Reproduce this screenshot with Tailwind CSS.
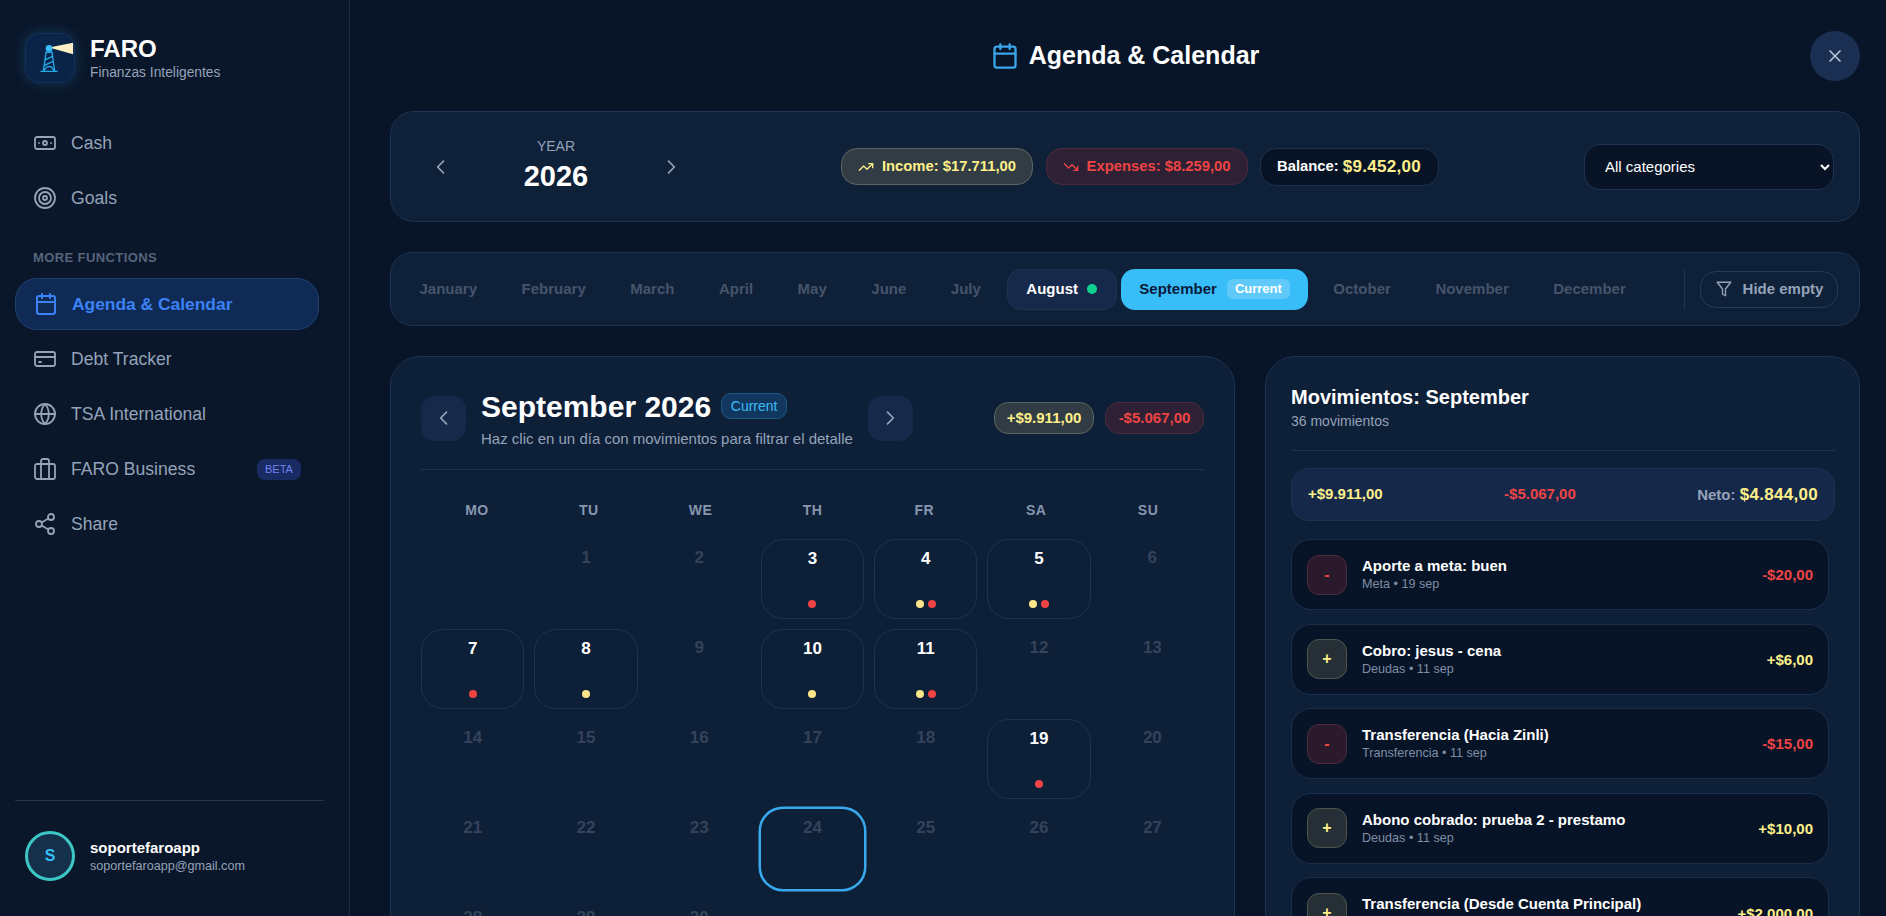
<!DOCTYPE html>
<html lang="en">
<head>
  <meta charset="UTF-8">
  <title>FARO - Agenda & Calendar</title>
  <meta name="viewport" content="width=device-width, initial-scale=1.0">
  <script src="https://cdn.jsdelivr.net/npm/@tailwindcss/browser@4"></script>
</head>
<body class="h-screen overflow-hidden flex bg-[#081528] text-white font-['Liberation_Sans',Arial,sans-serif]">
  <!-- Sidebar -->
  <aside class="w-[350px] shrink-0 h-full flex flex-col bg-[#0a162a] border-r border-[#1c2c45] pt-[33px] pl-[15px] pr-[25px]">
    <div class="flex items-center gap-[15px] ml-[10px]">
      <div class="w-[50px] h-[50px] rounded-[14px] bg-[#0a2448] border border-[#123058] shadow-[0_0_14px_rgba(56,189,248,0.22)] overflow-hidden">
        <svg viewBox="0 0 50 50" class="w-full h-full" fill="none">
          <polygon points="24,14 49,9 49,21" fill="#fdf0c4"/>
          <circle cx="24" cy="15" r="3.5" fill="#38bdf8"/>
          <path d="M20 19h8M21 19l-3 20M27 19l3 20M15 39h18M20 27l8-4M19 33l10-5M18 39l4-5h4l4 5" stroke="#25a9e6" stroke-width="1.4"/>
        </svg>
      </div>
      <div>
        <div class="text-2xl leading-[27px] font-bold">FARO</div>
        <div class="text-[13.8px] leading-[17px] mt-[2px] text-[#94a3b8]">Finanzas Inteligentes</div>
      </div>
    </div>

    <nav class="mt-[34px] flex flex-col gap-[3px] text-[17.6px] text-[#94a3b8]">
      <a class="h-[52px] pl-[18px] flex items-center gap-[14px]">
        <svg class="w-6 h-6" viewBox="0 0 24 24" fill="none" stroke="currentColor" stroke-width="1.8" stroke-linecap="round" stroke-linejoin="round"><rect x="2" y="6" width="20" height="12" rx="2"/><circle cx="12" cy="12" r="2"/><path d="M6 12h.01M18 12h.01"/></svg>
        Cash
      </a>
      <a class="h-[52px] pl-[18px] flex items-center gap-[14px]">
        <svg class="w-6 h-6" viewBox="0 0 24 24" fill="none" stroke="currentColor" stroke-width="1.8"><circle cx="12" cy="12" r="10"/><circle cx="12" cy="12" r="6"/><circle cx="12" cy="12" r="2"/></svg>
        Goals
      </a>
      <div class="mt-[23px] mb-[9px] ml-[18px] h-4 leading-4 text-[13px] font-bold tracking-[0.4px] text-[#56657c]">MORE FUNCTIONS</div>
      <a class="h-[52px] mr-[5px] pl-[18px] flex items-center gap-[14px] rounded-[22px] bg-[#0f2a55] border border-[#1d4070] font-bold text-[#3b82f6] text-[17.4px]">
        <svg class="w-6 h-6" viewBox="0 0 24 24" fill="none" stroke="currentColor" stroke-width="2" stroke-linecap="round" stroke-linejoin="round"><path d="M8 2v4M16 2v4"/><rect x="3" y="4" width="18" height="18" rx="2"/><path d="M3 10h18"/></svg>
        Agenda &amp; Calendar
      </a>
      <a class="h-[52px] pl-[18px] flex items-center gap-[14px]">
        <svg class="w-6 h-6" viewBox="0 0 24 24" fill="none" stroke="currentColor" stroke-width="1.8" stroke-linecap="round" stroke-linejoin="round"><rect x="2" y="5" width="20" height="14" rx="2"/><path d="M2 10h20M6 15h2"/></svg>
        Debt Tracker
      </a>
      <a class="h-[52px] pl-[18px] flex items-center gap-[14px]">
        <svg class="w-6 h-6" viewBox="0 0 24 24" fill="none" stroke="currentColor" stroke-width="1.8" stroke-linecap="round" stroke-linejoin="round"><circle cx="12" cy="12" r="10"/><path d="M2 12h20M12 2a15 15 0 0 1 0 20a15 15 0 0 1 0-20z"/></svg>
        TSA International
      </a>
      <a class="h-[52px] pl-[18px] pr-[23px] flex items-center gap-[14px]">
        <svg class="w-6 h-6" viewBox="0 0 24 24" fill="none" stroke="currentColor" stroke-width="1.8" stroke-linecap="round" stroke-linejoin="round"><rect x="2" y="7" width="20" height="15" rx="2"/><path d="M8 22V4a2 2 0 0 1 2-2h4a2 2 0 0 1 2 2v18"/></svg>
        FARO Business
        <span class="ml-auto w-[44px] h-[21px] rounded-[8px] bg-[#1a2a63] text-[#6f83f0] text-[11px] flex items-center justify-center">BETA</span>
      </a>
      <a class="h-[52px] pl-[18px] flex items-center gap-[14px]">
        <svg class="w-6 h-6" viewBox="0 0 24 24" fill="none" stroke="currentColor" stroke-width="1.8" stroke-linecap="round" stroke-linejoin="round"><circle cx="18" cy="5" r="3"/><circle cx="6" cy="12" r="3"/><circle cx="18" cy="19" r="3"/><path d="M8.6 13.5l6.8 4M15.4 6.5l-6.8 4"/></svg>
        Share
      </a>
    </nav>

    <div class="mt-auto border-t border-[#1f3450] h-[116px] pt-[30px] pl-[10px] flex items-start gap-[15px]">
      <div class="w-[50px] h-[50px] rounded-full bg-[#14304a] border-[3px] border-[#3cc7c4] flex items-center justify-center text-[#38bdf8] font-bold text-base">S</div>
      <div class="pt-[7px]">
        <div class="text-[15px] leading-[19px] font-bold">soportefaroapp</div>
        <div class="text-[12.6px] leading-[18px] text-[#94a3b8]">soportefaroapp@gmail.com</div>
      </div>
    </div>
  </aside>

  <!-- Main -->
  <main class="flex-1 min-w-0 h-full overflow-hidden pt-[31px] pl-10 pr-[26px]">
    <header class="grid grid-cols-[1fr_auto_1fr] items-center h-[50px] mb-[30px]">
      <div></div>
      <h1 class="flex items-center gap-[10px] text-[25px] font-bold">
        <svg class="w-7 h-7 text-[#38a6e8]" viewBox="0 0 24 24" fill="none" stroke="currentColor" stroke-width="2" stroke-linecap="round" stroke-linejoin="round"><path d="M8 2v4M16 2v4"/><rect x="3" y="4" width="18" height="18" rx="2"/><path d="M3 10h18"/></svg>
        Agenda &amp; Calendar
      </h1>
      <button class="justify-self-end w-[50px] h-[50px] rounded-full bg-[#1a2f52] flex items-center justify-center text-[#b6c4d8]">
        <svg class="w-5 h-5" viewBox="0 0 24 24" fill="none" stroke="currentColor" stroke-width="2" stroke-linecap="round"><path d="M18 6L6 18M6 6l12 12"/></svg>
      </button>
    </header>

    <!-- Year bar -->
    <section class="h-[111px] rounded-[24px] bg-[#0f2039] border border-[#1e3352] px-[25px] flex items-center justify-between">
      <div class="flex items-center">
        <button class="w-[50px] flex justify-center text-[#94a3b8]">
          <svg class="w-5 h-5" viewBox="0 0 24 24" fill="none" stroke="currentColor" stroke-width="2" stroke-linecap="round" stroke-linejoin="round"><path d="M15 5l-7 7 7 7"/></svg>
        </button>
        <div class="w-[180px] text-center -mt-[3px]">
          <div class="text-sm leading-[18px] text-[#94a3b8]">YEAR</div>
          <div class="text-[29px] leading-[36px] font-bold mt-[3px]">2026</div>
        </div>
        <button class="w-[50px] flex justify-center text-[#94a3b8]">
          <svg class="w-5 h-5" viewBox="0 0 24 24" fill="none" stroke="currentColor" stroke-width="2" stroke-linecap="round" stroke-linejoin="round"><path d="M9 5l7 7-7 7"/></svg>
        </button>
      </div>
      <div class="flex items-center gap-[12.5px] text-[14.8px] font-bold">
        <div class="h-[37px] px-4 rounded-[16px] bg-[#323c44] border border-[#5c665f] text-[#fef08a] flex items-center gap-2">
          <svg class="w-4 h-4" viewBox="0 0 24 24" fill="none" stroke="currentColor" stroke-width="2" stroke-linecap="round" stroke-linejoin="round"><path d="M22 7l-8.5 8.5-5-5L2 17"/><path d="M16 7h6v6"/></svg>
          Income: $17.711,00
        </div>
        <div class="h-[37px] px-4 rounded-[16px] bg-[#2e2136] border border-[#4d2a3a] text-[#ef4444] flex items-center gap-2">
          <svg class="w-4 h-4" viewBox="0 0 24 24" fill="none" stroke="currentColor" stroke-width="2" stroke-linecap="round" stroke-linejoin="round"><path d="M22 17l-8.5-8.5-5 5L2 7"/><path d="M16 17h6v-6"/></svg>
          Expenses: $8.259,00
        </div>
        <div class="h-[38px] pl-4 pr-[17px] rounded-[16px] bg-[#081426] border border-[#1c3150] flex items-center gap-1">
          Balance: <span class="text-[17px] tracking-[0.3px] text-[#fef08a]">$9.452,00</span>
        </div>
      </div>
      <select class="w-[250px] h-[46px] rounded-[16px] bg-[#081426] border border-[#1e3352] pl-4 text-[15px] text-white">
        <option>All categories</option>
      </select>
    </section>

    <!-- Month tabs -->
    <section class="mt-[30px] h-[74px] rounded-[22px] bg-[#0f2039] border border-[#1e3352] pl-[10.5px] pr-[21px] flex items-center text-[15px] font-bold text-[#46546b]">
      <div class="flex items-center gap-[8.5px]">
        <span class="h-[41px] px-[18px] flex items-center">January</span>
        <span class="h-[41px] px-[18px] flex items-center">February</span>
        <span class="h-[41px] px-[18px] flex items-center">March</span>
        <span class="h-[41px] px-[18px] flex items-center">April</span>
        <span class="h-[41px] px-[18px] flex items-center">May</span>
        <span class="h-[41px] px-[18px] flex items-center">June</span>
        <span class="h-[41px] px-[18px] flex items-center">July</span>
        <span class="h-[41px] w-[109.5px] -mr-[4px] px-[18px] flex items-center gap-[9px] rounded-[14px] bg-[#16294a] border border-[#1e3352] text-white">August <i class="w-[10px] h-[10px] rounded-full bg-[#10d08f]"></i></span>
        <span class="h-[41px] -mr-px px-[18px] flex items-center gap-[10px] rounded-[14px] bg-[#38bdf8] text-[#0b1a3a]">September <i class="not-italic w-[63px] h-[20px] rounded-[6px] bg-white/20 text-white text-[13px] flex items-center justify-center">Current</i></span>
        <span class="h-[41px] px-[18px] flex items-center">October</span>
        <span class="h-[41px] px-[18px] flex items-center">November</span>
        <span class="h-[41px] px-[18px] flex items-center">December</span>
      </div>
      <div class="ml-auto flex items-center gap-[15px]">
        <div class="w-px h-[42px] bg-[#1e3352]"></div>
        <button class="w-[138px] h-[37px] rounded-[16px] border border-[#263b5a] flex items-center justify-center gap-[10px] text-[#94a3b8] text-[15px] font-bold">
          <svg class="w-[18px] h-[18px]" viewBox="0 0 24 24" fill="none" stroke="currentColor" stroke-width="1.8" stroke-linejoin="round"><path d="M3 3h18l-7 9v9l-4-2v-7z"/></svg>
          Hide empty
        </button>
      </div>
    </section>

    <div class="mt-[30px] grid grid-cols-[845px_595px] gap-[30px]">
      <!-- Calendar -->
      <section class="rounded-t-[30px] bg-[#0e1f38] border border-[#1e3352] px-[30px] pt-[31px] h-[700px]">
        <div class="h-[82px] pb-[21px] border-b border-[#1e3352] flex items-center justify-between">
          <div class="flex items-center">
            <button class="w-[45px] h-[45px] rounded-[14px] bg-[#16294a] flex items-center justify-center text-[#94a3b8]">
              <svg class="w-5 h-5" viewBox="0 0 24 24" fill="none" stroke="currentColor" stroke-width="2" stroke-linecap="round" stroke-linejoin="round"><path d="M15 5l-7 7 7 7"/></svg>
            </button>
            <div class="ml-[15px] mr-[15px]">
              <div class="flex items-center gap-[10px] translate-y-px">
                <h2 class="text-3xl leading-[36px] font-bold">September 2026</h2>
                <span class="h-[26px] w-[66px] rounded-[10px] bg-[#11375e] border border-[#1c5a85] text-[#38bdf8] text-sm flex items-center justify-center -mt-[2px]">Current</span>
              </div>
              <p class="text-[15px] leading-[20px] text-[#94a3b8] mt-[5px]">Haz clic en un día con movimientos para filtrar el detalle</p>
            </div>
            <button class="w-[45px] h-[45px] rounded-[14px] bg-[#16294a] flex items-center justify-center text-[#94a3b8]">
              <svg class="w-5 h-5" viewBox="0 0 24 24" fill="none" stroke="currentColor" stroke-width="2" stroke-linecap="round" stroke-linejoin="round"><path d="M9 5l7 7-7 7"/></svg>
            </button>
          </div>
          <div class="flex items-center gap-[11px] text-[15px] font-bold">
            <span class="h-8 w-[100px] rounded-[14px] bg-[#323c44] border border-[#5c665f] text-[#fef08a] flex items-center justify-center">+$9.911,00</span>
            <span class="h-8 w-[99px] rounded-[14px] bg-[#2e2136] border border-[#4d2a3a] text-[#ef4444] flex items-center justify-center">-$5.067,00</span>
          </div>
        </div>

        <div class="grid grid-cols-7 mt-[31px] h-[18px] text-sm leading-[18px] font-bold tracking-[0.5px] text-[#8696af] text-center">
          <div>MO</div><div>TU</div><div>WE</div><div>TH</div><div>FR</div><div>SA</div><div>SU</div>
        </div>

        <div class="grid grid-cols-7 gap-[10px] auto-rows-[80px] mt-[20px] text-[17px] font-bold text-center text-[#34435b]">
          <div></div>
          <div class="pt-[6px]">1</div>
          <div class="pt-[6px]">2</div>
          <div class="pt-[6px] rounded-[22px] border border-[#1e3352] text-white flex flex-col items-center">3<div class="mt-auto mb-[10px] flex gap-1"><i class="w-2 h-2 rounded-full bg-[#ef4444]"></i></div></div>
          <div class="pt-[6px] rounded-[22px] border border-[#1e3352] text-white flex flex-col items-center">4<div class="mt-auto mb-[10px] flex gap-1"><i class="w-2 h-2 rounded-full bg-[#fde68a]"></i><i class="w-2 h-2 rounded-full bg-[#ef4444]"></i></div></div>
          <div class="pt-[6px] rounded-[22px] border border-[#1e3352] text-white flex flex-col items-center">5<div class="mt-auto mb-[10px] flex gap-1"><i class="w-2 h-2 rounded-full bg-[#fde68a]"></i><i class="w-2 h-2 rounded-full bg-[#ef4444]"></i></div></div>
          <div class="pt-[6px]">6</div>

          <div class="pt-[6px] rounded-[22px] border border-[#1e3352] text-white flex flex-col items-center">7<div class="mt-auto mb-[10px] flex gap-1"><i class="w-2 h-2 rounded-full bg-[#ef4444]"></i></div></div>
          <div class="pt-[6px] rounded-[22px] border border-[#1e3352] text-white flex flex-col items-center">8<div class="mt-auto mb-[10px] flex gap-1"><i class="w-2 h-2 rounded-full bg-[#fde68a]"></i></div></div>
          <div class="pt-[6px]">9</div>
          <div class="pt-[6px] rounded-[22px] border border-[#1e3352] text-white flex flex-col items-center">10<div class="mt-auto mb-[10px] flex gap-1"><i class="w-2 h-2 rounded-full bg-[#fde68a]"></i></div></div>
          <div class="pt-[6px] rounded-[22px] border border-[#1e3352] text-white flex flex-col items-center">11<div class="mt-auto mb-[10px] flex gap-1"><i class="w-2 h-2 rounded-full bg-[#fde68a]"></i><i class="w-2 h-2 rounded-full bg-[#ef4444]"></i></div></div>
          <div class="pt-[6px]">12</div>
          <div class="pt-[6px]">13</div>

          <div class="pt-[6px]">14</div>
          <div class="pt-[6px]">15</div>
          <div class="pt-[6px]">16</div>
          <div class="pt-[6px]">17</div>
          <div class="pt-[6px]">18</div>
          <div class="pt-[6px] rounded-[22px] border border-[#1e3352] text-white flex flex-col items-center">19<div class="mt-auto mb-[10px] flex gap-1"><i class="w-2 h-2 rounded-full bg-[#ef4444]"></i></div></div>
          <div class="pt-[6px]">20</div>

          <div class="pt-[6px]">21</div>
          <div class="pt-[6px]">22</div>
          <div class="pt-[6px]">23</div>
          <div class="pt-[6px] rounded-[22px] ring-[2.5px] ring-[#38a9ec]">24</div>
          <div class="pt-[6px]">25</div>
          <div class="pt-[6px]">26</div>
          <div class="pt-[6px]">27</div>

          <div class="pt-[6px]">28</div>
          <div class="pt-[6px]">29</div>
          <div class="pt-[6px]">30</div>
        </div>
      </section>

      <!-- Movements -->
      <section class="rounded-t-[30px] bg-[#0e1f38] border border-[#1e3352] pl-[25px] pr-[24px] pt-[27px] h-[700px]">
        <h3 class="text-xl leading-[26px] font-bold">Movimientos: September</h3>
        <p class="text-sm leading-[18px] text-[#94a3b8] mt-[2px]">36 movimientos</p>
        <div class="border-t border-[#1e3352] mt-[20px]"></div>
        <div class="mt-[17px] h-[53px] rounded-[18px] bg-[#16284a] border border-[#1e3352] px-4 flex items-center justify-between text-[15px] font-bold">
          <span class="text-[#fef08a]">+$9.911,00</span>
          <span class="text-[#ef4444]">-$5.067,00</span>
          <span class="text-[#94a3b8]">Neto: <span class="text-[17px] tracking-[0.3px] text-[#fef08a]">$4.844,00</span></span>
        </div>
        <div class="mt-[18px] mr-[6px] flex flex-col gap-[13.6px]">
          <div class="h-[71px] shrink-0 rounded-[20px] bg-[#071427] border border-[#1a2e4c] px-[15px] flex items-center gap-[15px]">
            <div class="w-10 h-10 rounded-[12px] bg-[#2a1a2c] border border-[#4d2a3a] text-[#ef4444] font-bold flex items-center justify-center">-</div>
            <div class="flex-1">
              <div class="text-[15px] leading-[19px] font-bold">Aporte a meta: buen</div>
              <div class="text-[12.6px] leading-[17px] text-[#7f8ea6] mt-[1px]">Meta • 19 sep</div>
            </div>
            <div class="text-[15px] font-bold text-[#ef4444] pt-[2px]">-$20,00</div>
          </div>
          <div class="h-[71px] shrink-0 rounded-[20px] bg-[#071427] border border-[#1a2e4c] px-[15px] flex items-center gap-[15px]">
            <div class="w-10 h-10 rounded-[12px] bg-[#252f35] border border-[#4c564f] text-[#fef08a] font-bold flex items-center justify-center">+</div>
            <div class="flex-1">
              <div class="text-[15px] leading-[19px] font-bold">Cobro: jesus - cena</div>
              <div class="text-[12.6px] leading-[17px] text-[#7f8ea6] mt-[1px]">Deudas • 11 sep</div>
            </div>
            <div class="text-[15px] font-bold text-[#fef08a] pt-[2px]">+$6,00</div>
          </div>
          <div class="h-[71px] shrink-0 rounded-[20px] bg-[#071427] border border-[#1a2e4c] px-[15px] flex items-center gap-[15px]">
            <div class="w-10 h-10 rounded-[12px] bg-[#2a1a2c] border border-[#4d2a3a] text-[#ef4444] font-bold flex items-center justify-center">-</div>
            <div class="flex-1">
              <div class="text-[15px] leading-[19px] font-bold">Transferencia (Hacia Zinli)</div>
              <div class="text-[12.6px] leading-[17px] text-[#7f8ea6] mt-[1px]">Transferencia • 11 sep</div>
            </div>
            <div class="text-[15px] font-bold text-[#ef4444] pt-[2px]">-$15,00</div>
          </div>
          <div class="h-[71px] shrink-0 rounded-[20px] bg-[#071427] border border-[#1a2e4c] px-[15px] flex items-center gap-[15px]">
            <div class="w-10 h-10 rounded-[12px] bg-[#252f35] border border-[#4c564f] text-[#fef08a] font-bold flex items-center justify-center">+</div>
            <div class="flex-1">
              <div class="text-[15px] leading-[19px] font-bold">Abono cobrado: prueba 2 - prestamo</div>
              <div class="text-[12.6px] leading-[17px] text-[#7f8ea6] mt-[1px]">Deudas • 11 sep</div>
            </div>
            <div class="text-[15px] font-bold text-[#fef08a] pt-[2px]">+$10,00</div>
          </div>
          <div class="h-[71px] shrink-0 rounded-[20px] bg-[#071427] border border-[#1a2e4c] px-[15px] flex items-center gap-[15px]">
            <div class="w-10 h-10 rounded-[12px] bg-[#252f35] border border-[#4c564f] text-[#fef08a] font-bold flex items-center justify-center">+</div>
            <div class="flex-1">
              <div class="text-[15px] leading-[19px] font-bold">Transferencia (Desde Cuenta Principal)</div>
              <div class="text-[12.6px] leading-[17px] text-[#7f8ea6] mt-[1px]">Transferencia • 11 sep</div>
            </div>
            <div class="text-[15px] font-bold text-[#fef08a] pt-[2px]">+$2.000,00</div>
          </div>
        </div>
      </section>
    </div>
  </main>
</body>
</html>
